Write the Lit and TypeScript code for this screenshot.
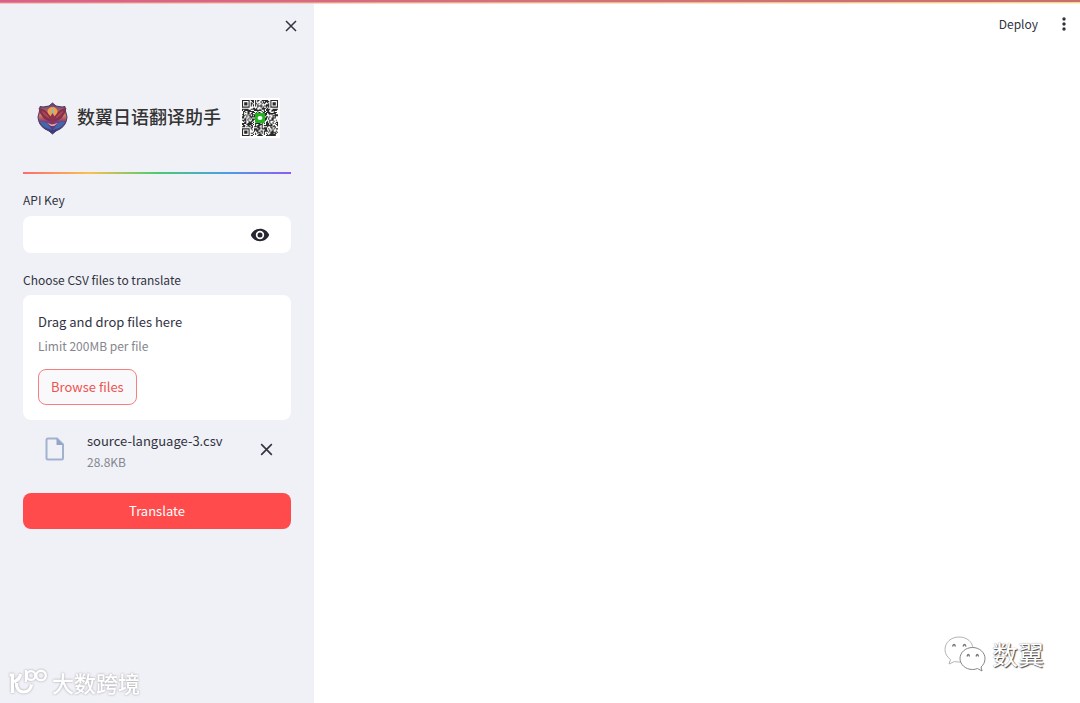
import { LitElement, html, svg, css } from "lit";
import { customElement, state } from "lit/decorators.js";

const QR_SIZE = 33;

/** Builds the path of a QR-like grid: three finders and seeded modules. */
function qrPath(): string {
  const n = QR_SIZE;
  let seed = 20231;
  const next = () => {
    seed = (seed * 1103515245 + 12345) % 2147483648;
    return seed / 2147483648;
  };
  const finder = (x: number, y: number, ox: number, oy: number) => {
    const dx = x - ox;
    const dy = y - oy;
    if (dx < -1 || dx > 7 || dy < -1 || dy > 7) return null;
    const ring = Math.max(Math.abs(dx - 3), Math.abs(dy - 3));
    return ring === 3 || ring <= 1;
  };
  let d = "";
  for (let y = 0; y < n; y++) {
    for (let x = 0; x < n; x++) {
      const random = next() < 0.54;
      const on =
        finder(x, y, 0, 0) ?? finder(x, y, n - 7, 0) ?? finder(x, y, 0, n - 7) ?? random;
      if (on) d += `M${x} ${y}h1v1h-1z`;
    }
  }
  return d;
}

const QR = qrPath();

const crossIcon = svg`<path d="M3 3L13 13M13 3L3 13" fill="none" stroke="currentColor" stroke-width="1.5"/>`;

@customElement("app-root")
export class AppRoot extends LitElement {
  static styles = css`
    :host {
      display: block;
      position: relative;
      min-height: 100vh;
      background: #fff;
      color: #31333f;
      font-family: "Noto Sans CJK SC", "Noto Sans", sans-serif;
      font-size: 13px;
      line-height: 20px;
    }
    * {
      box-sizing: border-box;
    }
    svg {
      display: block;
      flex: none;
    }
    button,
    input {
      font: inherit;
      color: inherit;
      margin: 0;
    }
    .shell {
      display: grid;
      grid-template-columns: 314px 1fr;
      min-height: 100vh;
    }
    .stripe {
      position: absolute;
      inset: 0 0 auto 0;
      height: 3px;
      background: linear-gradient(90deg, #db6088, #d4717c 50%, #c9706c);
    }
    .stripe::after {
      content: "";
      position: absolute;
      inset: 2px 0 auto 0;
      height: 2px;
      background: linear-gradient(90deg, #ee9d8f80, #fff0b0cc);
    }
    aside {
      background: #f0f1f6;
      padding: 16px 23px;
      display: flex;
      flex-direction: column;
    }
    .icon-button {
      display: grid;
      place-items: center;
      padding: 0;
      border: 0;
      background: none;
      cursor: pointer;
    }
    .close {
      align-self: flex-end;
      width: 20px;
      height: 20px;
      margin-right: -10px;
    }
    .brand {
      display: flex;
      align-items: center;
      margin: 62px 11px 0 14px;
      height: 40px;
    }
    .brand h1 {
      flex: 1;
      margin: 0 0 0 9px;
      padding-bottom: 4px;
      color: #333;
      font-size: 18px;
      line-height: 28px;
      font-weight: 500;
      white-space: nowrap;
    }
    .rainbow {
      width: 100%;
      height: 2px;
      margin: 34px 0 16px;
      border: 0;
      background: linear-gradient(90deg, #ff6b6b, #f9c04f 25%, #4bcb70 50%, #4a9fe8 75%, #8e5cf0);
    }
    .label {
      display: block;
      font-size: 12px;
      line-height: 20px;
    }
    .field {
      display: flex;
      height: 37px;
      margin: 6px 0 17px;
      border-radius: 8px;
      background: #fff;
      overflow: hidden;
    }
    .field input {
      flex: 1;
      min-width: 0;
      padding: 0 12px;
      border: 0;
      outline: 0;
      background: none;
    }
    .eye {
      width: 62px;
    }
    .drop {
      margin-top: 5px;
      padding: 16px 15px 15px;
      border-radius: 8px;
      background: #fff;
    }
    .drop p {
      margin: 0;
      line-height: 22px;
    }
    .note {
      display: block;
      color: #85868e;
      font-size: 12px;
      line-height: 20px;
    }
    .drop .note {
      margin: 3px 0 13px;
    }
    .browse {
      height: 36px;
      padding: 0 12px;
      border: 1px solid #f77f80;
      border-radius: 8px;
      background: #f9f9fb;
      color: #ee5350;
      cursor: pointer;
    }
    .file {
      display: flex;
      align-items: flex-start;
      padding: 10px 16px 21px 22px;
    }
    .file > svg {
      margin-top: 7px;
    }
    .file > button {
      margin-top: 11px;
    }
    .file-text {
      flex: 1;
      min-width: 0;
      margin-left: 22px;
    }
    .file-name {
      display: block;
      line-height: 22px;
    }
    .translate {
      height: 36px;
      border: 0;
      border-radius: 8px;
      background: #ff4b4b;
      color: #fff;
      cursor: pointer;
    }
    header {
      display: flex;
      justify-content: flex-end;
      align-items: center;
      gap: 16px;
      padding: 14px 6px;
    }
    .deploy {
      padding: 0;
      border: 0;
      background: none;
      font-size: 12px;
      line-height: 20px;
      cursor: pointer;
    }
    .menu {
      width: 20px;
      height: 20px;
    }
    .mark {
      position: absolute;
      display: flex;
      align-items: center;
      color: #fff;
      white-space: nowrap;
      pointer-events: none;
    }
    .mark-left {
      left: 8px;
      bottom: 5px;
      gap: 4px;
      font-size: 22px;
      line-height: 32px;
      font-weight: 500;
      filter: drop-shadow(0 0 1px #a0a0a5);
    }
    .mark-right {
      right: 36px;
      bottom: 29px;
      gap: 6px;
      font-size: 26px;
      line-height: 40px;
      text-shadow: 1px 1px 1px #444, 0 0 1px #888;
    }
  `;

  @state() private visible = false;
  @state() private hasFile = true;

  render() {
    return html`
      <div class="shell">
        <aside>
          <button class="icon-button close" aria-label="Close sidebar">
            <svg width="16" height="16" viewBox="0 0 16 16">${crossIcon}</svg>
          </button>
          <div class="brand">
            ${this.crest()}
            <h1>数翼日语翻译助手</h1>
            ${this.qr()}
          </div>
          <hr class="rainbow" />
          <label class="label" for="key">API Key</label>
          <div class="field">
            <input
              id="key"
              type=${this.visible ? "text" : "password"}
              autocomplete="off"
            />
            <button
              class="icon-button eye"
              aria-label="Show API key"
              @click=${() => (this.visible = !this.visible)}
            >
              <svg width="20" height="20" viewBox="0 0 20 20">
                <path
                  fill="#262730"
                  fill-rule="evenodd"
                  d="M10 3.8C5.8 3.8 2.300 6.300 .8 10C2.300 13.700 5.800 16.200 10 16.200S17.700 13.700 19.200 10C17.700 6.300 14.200 3.800 10 3.800ZM10 14.200A4.200 4.200 0 1 1 10 5.800A4.200 4.200 0 0 1 10 14.200ZM10 7.500A2.500 2.500 0 1 0 10 12.500A2.500 2.500 0 0 0 10 7.500Z"
                />
              </svg>
            </button>
          </div>
          <span class="label" id="upload-label">Choose CSV files to translate</span>
          <section class="drop" aria-labelledby="upload-label">
            <p>Drag and drop files here</p>
            <span class="note">Limit 200MB per file</span>
            <button class="browse">Browse files</button>
          </section>
          ${this.hasFile ? this.fileRow() : null}
          <button class="translate">Translate</button>
        </aside>
        <main>
          <header>
            <button class="deploy">Deploy</button>
            <button class="icon-button menu" aria-label="Main menu">
              <svg width="20" height="20" viewBox="0 0 20 20" fill="#31333f">
                <circle cx="10" cy="5" r="1.700" />
                <circle cx="10" cy="10" r="1.700" />
                <circle cx="10" cy="15" r="1.700" />
              </svg>
            </button>
          </header>
        </main>
      </div>
      <div class="stripe"></div>
      <div class="mark mark-left">
        <svg width="40" height="32" viewBox="0 0 40 32" fill="none" stroke="#fff" stroke-width="3.200">
          <path d="M1.500 9H4.500V27M12.500 8Q12 13 6 16M8.500 17C8 22 11 26 15.500 26C20 26 23 23 23.500 18.500" />
          <path d="M18 4V16" stroke-width="2.400" />
          <circle cx="23" cy="9.500" r="4.400" stroke-width="2.400" />
          <circle cx="33" cy="9.500" r="4.800" stroke-width="2.400" />
        </svg>
        <span>大数跨境</span>
      </div>
      <div class="mark mark-right">
        <svg width="42" height="38" viewBox="0 0 42 38" fill="#fff" stroke="#aaa" stroke-width="0.900">
          <path d="M15 2C7 2 1 7.500 1 14.500C1 18.500 3 22 6.500 24.500L5 29L10.500 26.500C12 27 14 27 16 27C24 27 29 21 29 14.500C29 7 23 2 15 2Z" />
          <path stroke="#777" d="M28.500 12.500C21.500 12.500 16 17.500 16 23.500C16 29.500 21.500 34.500 28.500 34.500C30.500 34.500 32 34.200 33.500 33.500L38 36L37 32C39.500 30 41 27 41 23.500C41 17.500 35.500 12.500 28.500 12.500Z" />
          <path fill="none" stroke="#777" stroke-width="1.300" d="M8.500 11.500Q10 7.500 11.500 11.500M19 11.500Q20.500 7.500 22 11.500M23 21.500Q24.300 17.500 25.600 21.500M32 21.500Q33.300 17.500 34.600 21.500" />
        </svg>
        <span>数翼</span>
      </div>
    `;
  }

  private fileRow() {
    return html`
      <div class="file">
        <svg width="20" height="24" viewBox="0 0 20 24">
          <path
            d="M3 1.500H12L18 7.500V21Q18 22.500 16.500 22.500H3Q1.500 22.500 1.500 21V3Q1.500 1.500 3 1.500Z"
            fill="none"
            stroke="#a1b2cf"
            stroke-width="2"
          />
          <path d="M11.500 1.500V8H18.500Z" fill="#93a6c7" />
        </svg>
        <div class="file-text">
          <span class="file-name">source-language-3.csv</span>
          <span class="note">28.8KB</span>
        </div>
        <button
          class="icon-button"
          aria-label="Remove file"
          @click=${() => (this.hasFile = false)}
        >
          <svg width="17" height="17" viewBox="0 0 16 16">${crossIcon}</svg>
        </button>
      </div>
    `;
  }

  private crest() {
    return html`
      <svg width="31" height="33" viewBox="0 0 31 33">
        <defs>
          <linearGradient id="sky" x1="0" y1="0" x2="0" y2="1">
            <stop offset="0" stop-color="#5b3a78" />
            <stop offset="0.400" stop-color="#d97a58" />
            <stop offset="0.600" stop-color="#7d3f7a" />
            <stop offset="1" stop-color="#2b3b80" />
          </linearGradient>
        </defs>
        <path
          fill="url(#sky)"
          stroke="#43386b"
          stroke-width="1"
          d="M15.500 1L19 4L25 5L28 4.500L28.500 9L30 15Q29.500 23 23 27L19 29L15.500 32L12 29L8 27Q1.500 23 1 15L2.500 9L3 4.500L6 5L12 4Z"
        />
        <circle cx="15.500" cy="10" r="5" fill="#f0a050" />
        <path fill="#82304d" d="M14.500 20Q4 18 1.500 6Q9 7 11.500 12L15.500 17L19.500 12Q22 7 29.500 6Q27 18 16.500 20Z" />
        <path fill="#b04652" d="M13 17Q6 14 4.500 8.500Q10 11 13 17M18 17Q25 14 26.500 8.500Q21 11 18 17" />
        <path fill="#8c3352" d="M15.500 11L18 15L17 21L15.500 24L14 21L13 15Z" />
        <path fill="#3f68ad" d="M3 20Q9 19 12 24L15.500 28L9 26Q5 24 3 20M28 20Q22 19 19 24L15.500 28L22 26Q26 24 28 20" />
        <path fill="#e0a5b0" d="M10 21L15 22.500L21 21L17 24H14Z" />
        <path fill="#68c9c7" d="M15.500 6L17 11H14Z" />
      </svg>
    `;
  }

  private qr() {
    return html`
      <svg width="40" height="40" viewBox="0 0 40 40" role="img" aria-label="QR code">
        <rect width="40" height="40" fill="#fff" />
        <svg x="2" y="2" width="36" height="36" viewBox="0 0 33 33">
          <path d=${QR} fill="#2a2a2a" />
        </svg>
        <rect x="15" y="15" width="10" height="10" rx="1" fill="#1eb51e" />
        <ellipse cx="20" cy="20" rx="2.500" ry="2" fill="#fff" />
      </svg>
    `;
  }
}
